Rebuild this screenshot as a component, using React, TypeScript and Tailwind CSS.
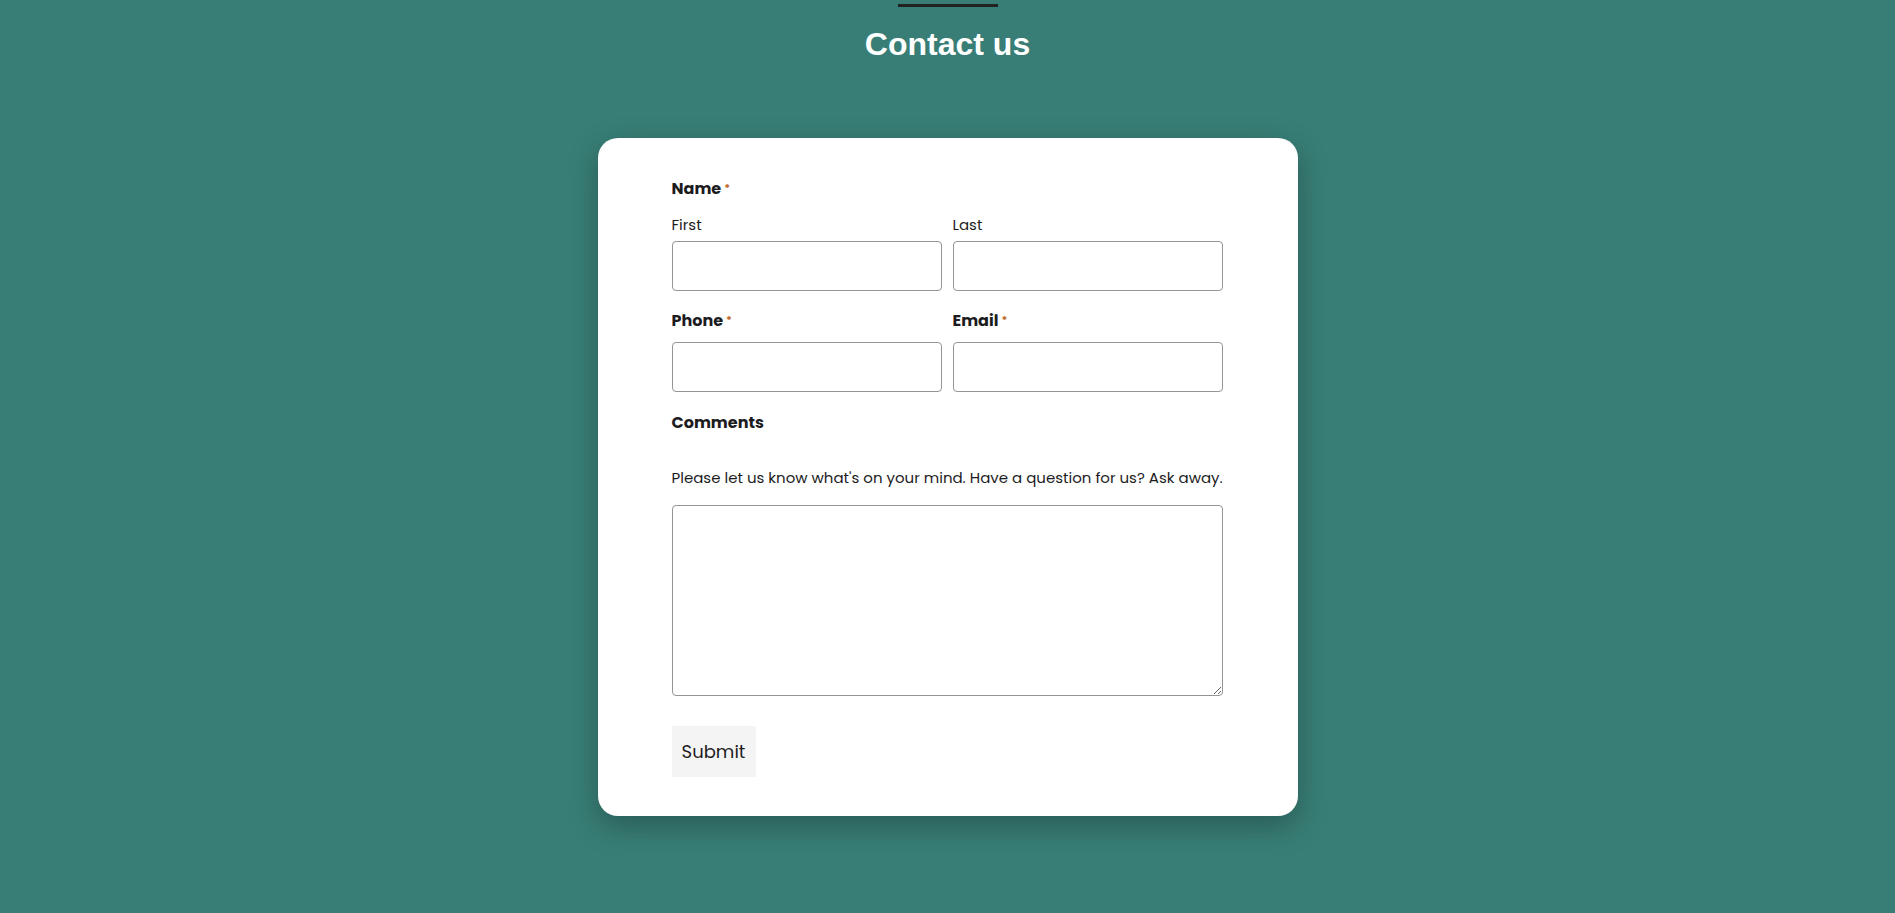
import React from "react";

const Req = () => (
  <span className="ml-[3px] text-[11px] font-bold text-[#c0692b] align-[2px]">*</span>
);

export default function App() {
  return (
    <div
      className="min-h-screen w-full bg-[#387e76] flex flex-col items-center"
      style={{ fontFamily: "Poppins, Inter, 'Noto Sans', sans-serif" }}
    >
      <div className="mt-[4px] h-[3px] w-[100px] bg-[#222222]" />
      <h1
        className="mt-[18px] text-[32px] leading-[38px] font-bold text-white"
        style={{ fontFamily: "'Liberation Sans', Arial, sans-serif" }}
      >
        Contact us
      </h1>

      <div className="mt-[75px] w-[700px] rounded-[20px] bg-white pl-[74px] pr-[75px] pt-[38px] pb-[39px] shadow-[0_10px_30px_rgba(0,0,0,0.28)] text-[#1c1c1e]">
        <div className="text-[16px] leading-[24px] font-bold">
          Name
          <Req />
        </div>
        <div className="mt-[14px] grid grid-cols-2 gap-x-[11px]">
          <div className="flex flex-col">
            <label className="text-[15px] leading-[20px]">First</label>
            <input className="mt-[6px] h-[50px] w-full rounded-[4px] border border-[#959595] bg-white outline-none" />
          </div>
          <div className="flex flex-col">
            <label className="text-[15px] leading-[20px]">Last</label>
            <input className="mt-[6px] h-[50px] w-full rounded-[4px] border border-[#959595] bg-white outline-none" />
          </div>
        </div>

        <div className="mt-[17px] grid grid-cols-2 gap-x-[11px]">
          <div className="flex flex-col">
            <label className="text-[16px] leading-[24px] font-bold">
              Phone
              <Req />
            </label>
            <input className="mt-[9px] h-[50px] w-full rounded-[4px] border border-[#959595] bg-white outline-none" />
          </div>
          <div className="flex flex-col">
            <label className="text-[16px] leading-[24px] font-bold">
              Email
              <Req />
            </label>
            <input className="mt-[9px] h-[50px] w-full rounded-[4px] border border-[#959595] bg-white outline-none" />
          </div>
        </div>

        <div className="mt-[19px] text-[16px] leading-[24px] font-bold">Comments</div>
        <p className="mt-[33px] whitespace-nowrap text-[15px] leading-[20px]">
          Please let us know what's on your mind. Have a question for us? Ask away.
        </p>
        <textarea className="mt-[17px] block h-[191px] w-full rounded-[4px] border border-[#959595] bg-white outline-none" />

        <button className="mt-[30px] flex h-[51px] w-[84px] items-center justify-center bg-[#f4f4f4] text-[18px] text-[#1c1c1e]">
          Submit
        </button>
      </div>
    </div>
  );
}
